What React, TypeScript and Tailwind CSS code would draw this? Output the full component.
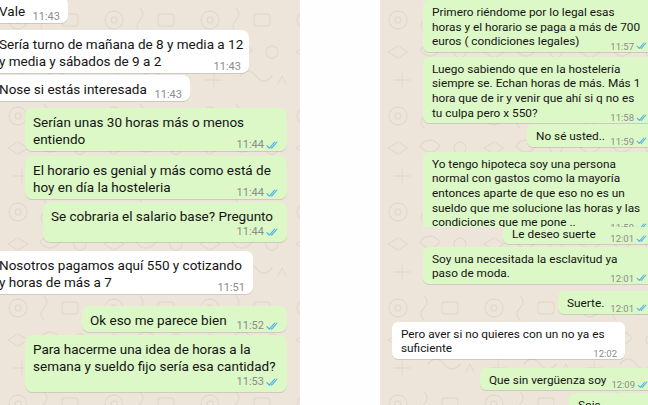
import React from "react";

type Msg = {
  lines: string[];
  time: string;
  out?: boolean;
  timeRow?: boolean;
  cls: string;
};

const Checks = ({ cls }: { cls: string }) => (
  <svg
    viewBox="0 0 16 11"
    className={cls}
    fill="none"
    stroke="#4fb3ea"
    strokeWidth="1.4"
    strokeLinecap="round"
    strokeLinejoin="round"
  >
    <path d="M1.2 5.8 L4.2 8.8 L10.6 1.4" />
    <path d="M6.6 8.4 L7 8.8 L13.4 1.4" />
  </svg>
);

const Doodles = () => (
  <svg className="absolute inset-0 h-full w-full" aria-hidden="true">
    <defs>
      <pattern id="wa" width="96" height="96" patternUnits="userSpaceOnUse">
        <g fill="none" stroke="#e3dacd" strokeWidth="1.3" strokeLinecap="round">
          <circle cx="18" cy="20" r="9" />
          <circle cx="18" cy="20" r="3" />
          <path d="M44 8 q6 6 0 12 q-6 6 0 12" />
          <rect x="62" y="14" width="16" height="12" rx="3" />
          <path d="M8 52 l10 -6 l10 6 l-10 6 z" />
          <path d="M40 50 c6 -8 14 -8 20 0 c-6 8 -14 8 -20 0" />
          <circle cx="80" cy="52" r="6" />
          <path d="M14 80 h16 M22 72 v16" />
          <path d="M48 76 q8 -10 16 0 t16 0" />
          <path d="M86 84 l4 -8 l4 8" />
        </g>
      </pattern>
    </defs>
    <rect width="100%" height="100%" fill="url(#wa)" />
  </svg>
);

const left: Msg[] = [
  { lines: ["Vale"], time: "11:43", cls: "self-start ml-[-9px] mt-[-3px] w-[77px]" },
  {
    lines: ["Sería turno de mañana de 8 y media a 12", "y media y sábados de 9 a 2"],
    time: "11:43",
    cls: "self-start ml-[-9px] mt-[7px] w-[258px]",
  },
  { lines: ["Nose si estás interesada"], time: "11:43", cls: "self-start ml-[-9px] mt-[2px] w-[199px]" },
  {
    lines: ["Serían unas 30 horas más o menos", "entiendo"],
    time: "11:44",
    out: true,
    cls: "self-end mr-[13px] mt-[7px] w-[262px]",
  },
  {
    lines: ["El horario es genial y más como está de", "hoy en día la hosteleria"],
    time: "11:44",
    out: true,
    cls: "self-end mr-[13px] mt-[5px] w-[262px]",
  },
  {
    lines: ["Se cobraria el salario base? Pregunto"],
    time: "11:44",
    out: true,
    timeRow: true,
    cls: "self-end mr-[13px] mt-[3px] w-[244px]",
  },
  {
    lines: ["Nosotros pagamos aquí 550 y cotizando", "y horas de más a 7"],
    time: "11:51",
    cls: "self-start ml-[-9px] mt-[9px] w-[262px]",
  },
  { lines: ["Ok eso me parece bien"], time: "11:52", out: true, cls: "self-end mr-[13px] mt-[12px] w-[205px]" },
  {
    lines: ["Para hacerme una idea de horas a la", "semana y sueldo fijo sería esa cantidad?"],
    time: "11:53",
    out: true,
    timeRow: true,
    cls: "self-end mr-[13px] mt-[3px] w-[262px]",
  },
];

function LBubble({ m }: { m: Msg }) {
  const bg = m.out ? "bg-[#dcf8c6]" : "bg-white";
  const meta = (
    <span className="flex shrink-0 items-center gap-[2px] text-[11px] leading-[12px] text-[#8c8c8c]">
      {m.time}
      {m.out && <Checks cls="h-[9px] w-[13px]" />}
    </span>
  );
  const n = m.lines.length;
  return (
    <div
      className={`${bg} rounded-[7px] pb-[3px] pl-[8px] pr-[8px] pt-[6px] text-[13.5px] leading-[17px] text-[#141414] shadow-[0_1px_0.5px_rgba(0,0,0,0.12)] ${m.cls}`}
    >
      {m.lines.map((l, i) =>
        i < n - 1 || m.timeRow ? (
          <div key={i} className="whitespace-nowrap">
            {l}
          </div>
        ) : (
          <div key={i} className="flex items-end justify-between gap-[4px]">
            <span className="whitespace-nowrap">{l}</span>
            <span className="mb-[-3px]">{meta}</span>
          </div>
        )
      )}
      {m.timeRow && <div className="flex h-[14px] items-center justify-end">{meta}</div>}
    </div>
  );
}

function RBubble({ m, inner }: { m: Msg; inner?: string }) {
  const bg = m.out ? "bg-[#dcf8c6]" : "bg-white";
  const meta = (
    <span className="flex shrink-0 items-center gap-[2px] text-[9.5px] leading-[11px] text-[#8c8c8c]">
      {m.time}
      {m.out && <Checks cls="h-[8px] w-[12px]" />}
    </span>
  );
  const n = m.lines.length;
  return (
    <div
      className={`${bg} rounded-[6px] pb-[3px] pl-[9px] pr-[8px] pt-[5px] text-[11.8px] leading-[14.6px] text-[#141414] shadow-[0_1px_0.5px_rgba(0,0,0,0.12)] ${m.cls} ${inner ?? ""}`}
    >
      {m.lines.map((l, i) =>
        i < n - 1 ? (
          <div key={i} className="whitespace-nowrap">
            {l}
          </div>
        ) : (
          <div key={i} className="flex items-end justify-between gap-[5px]">
            <span className="whitespace-nowrap">{l}</span>
            <span className="mb-[-3px]">{meta}</span>
          </div>
        )
      )}
    </div>
  );
}

export default function App() {
  return (
    <div
      className="flex h-[405px] w-[648px] overflow-hidden bg-white"
      style={{ fontFamily: "Roboto, 'Noto Sans', Arial, sans-serif" }}
    >
      {/* left screenshot */}
      <div className="relative h-full w-[300px] shrink-0 overflow-hidden bg-[#ede5da]">
        <Doodles />
        <div className="relative flex flex-col">
          {left.map((m, i) => (
            <LBubble key={i} m={m} />
          ))}
        </div>
      </div>

      {/* gap */}
      <div className="h-full w-[80px] shrink-0 bg-[#fefefe]" />

      {/* right screenshot */}
      <div className="relative h-full flex-1 overflow-hidden bg-[#ede5da]">
        <Doodles />
        <div className="relative flex flex-col">
          <RBubble
            m={{
              lines: [
                "Primero riéndome por lo legal esas",
                "horas y el horario se paga a más de 700",
                "euros ( condiciones legales)",
              ],
              time: "11:57",
              out: true,
              cls: "self-end mr-[-8px] mt-0 w-[233px]",
            }}
          />
          <RBubble
            m={{
              lines: [
                "Luego sabiendo que en la hostelería",
                "siempre se. Echan horas de más. Más 1",
                "hora que de ir y venir que ahí si q no es",
                "tu culpa pero x 550?",
              ],
              time: "11:58",
              out: true,
              cls: "self-end mr-[-8px] mt-[5px] w-[233px]",
            }}
          />
          <RBubble
            m={{ lines: ["No sé usted.."], time: "11:59", out: true, cls: "self-end mr-[-8px] mt-[1px] w-[129px]" }}
          />
          <div className="mr-[-8px] mt-[5px] h-[75px] w-[233px] self-end overflow-hidden">
            <RBubble
              m={{
                lines: [
                  "Yo tengo hipoteca soy una persona",
                  "normal con gastos como la mayoría",
                  "entonces aparte de que eso no es un",
                  "sueldo que me solucione las horas y las",
                  "condiciones que me pone ..",
                ],
                time: "11:59",
                out: true,
                cls: "w-[233px]",
              }}
            />
          </div>
          <div className="mr-[-8px] h-[18px] w-[153px] self-end overflow-hidden">
            <RBubble
              m={{ lines: ["Le deseo suerte"], time: "12:01", out: true, cls: "w-[153px]" }}
              inner="mt-[-5px]"
            />
          </div>
          <RBubble
            m={{
              lines: ["Soy una necesitada la esclavitud ya", "paso de moda."],
              time: "12:01",
              out: true,
              cls: "self-end mr-[-8px] mt-[2px] w-[233px]",
            }}
          />
          <RBubble
            m={{ lines: ["Suerte."], time: "12:01", out: true, cls: "self-end mr-[-8px] mt-[7px] w-[98px]" }}
          />
          <RBubble
            m={{
              lines: ["Pero aver si no quieres con un no ya es", "suficiente"],
              time: "12:02",
              cls: "self-start ml-[12px] mt-[8px] w-[233px]",
            }}
          />
          <RBubble
            m={{
              lines: ["Que sin vergüenza soy"],
              time: "12:09",
              out: true,
              cls: "self-end mr-[-8px] mt-[9px] w-[176px]",
            }}
          />
          <RBubble
            m={{ lines: ["Sois"], time: "12:10", out: true, cls: "self-end mr-[-8px] mt-[3px] w-[87px]" }}
          />
        </div>
      </div>
    </div>
  );
}
